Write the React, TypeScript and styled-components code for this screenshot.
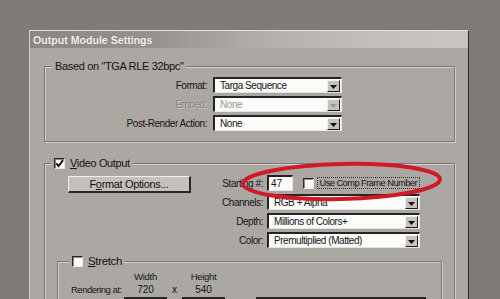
import React from "react";
import styled, { createGlobalStyle } from "styled-components";

const dialogBg = "#aba7a3";
const darkLine = "#7b7774";
const lightLine = "#d3cfcb";

const GlobalStyle = createGlobalStyle`
  html, body {
    margin: 0;
    padding: 0;
    background: #7f7b78;
  }
  body {
    width: 500px;
    height: 299px;
    overflow: hidden;
    font-family: "Liberation Sans", Arial, sans-serif;
    color: #151515;
  }
`;

export default function App() {
  return (
    <>
      <GlobalStyle />
      <Page>
        <Dialog>
          <TitleBar>Output Module Settings</TitleBar>
          <Body>
            <Group>
              <Legend $ml={7}>Based on "TGA RLE 32bpc"</Legend>
              <FormatGrid>
                <Label>Format:</Label>
                <Select value="Targa Sequence" />
                <Label $disabled>Embed:</Label>
                <Select value="None" disabled />
                <Label>Post-Render Action:</Label>
                <Select value="None" />
              </FormatGrid>
            </Group>

            <Group $mt={21}>
              <Legend $ml={6}>
                <CheckBox checked />
                <span>
                  <u>V</u>ideo Output
                </span>
              </Legend>
              <VideoGrid>
                <PushButton>
                  F<u>o</u>rmat Options...
                </PushButton>
                <VLabel>Starting #:</VLabel>
                <InlineRow>
                  <TextBox>47</TextBox>
                  <CheckBox $ml={10} />
                  <FocusLabel>Use Comp Frame Number</FocusLabel>
                </InlineRow>
                <VLabel>Channels:</VLabel>
                <Select value="RGB + Alpha" />
                <VLabel>Depth:</VLabel>
                <Select value="Millions of Colors+" />
                <VLabel>Color:</VLabel>
                <Select value="Premultiplied (Matted)" />
              </VideoGrid>

              <Group $mt={13} $mx={12}>
                <Legend $ml={11} $size={11.5}>
                  <CheckBox />
                  <span>
                    <u>S</u>tretch
                  </span>
                </Legend>
                <StretchGrid>
                  <span />
                  <ColHead>Width</ColHead>
                  <span />
                  <ColHead>Height</ColHead>
                  <span />
                  <SmallLabel>Rendering at:</SmallLabel>
                  <Num>720</Num>
                  <Num>x</Num>
                  <Num>540</Num>
                  <span />
                  <span />
                  <NumBox />
                  <span />
                  <NumBox />
                  <NumBox $ml={31} />
                </StretchGrid>
              </Group>
            </Group>
          </Body>
        </Dialog>

        <Annotation width="500" height="299" viewBox="0 0 500 299">
          <ellipse
            cx="341.5"
            cy="181.5"
            rx="98.5"
            ry="17.5"
            transform="rotate(-1.3 341.5 181.5)"
            fill="none"
            stroke="#cf1b26"
            strokeWidth="4"
          />
        </Annotation>
      </Page>
    </>
  );
}

function Select({ value, disabled }: { value: string; disabled?: boolean }) {
  return (
    <SelectBox $disabled={disabled}>
      <span>{value}</span>
      <ArrowButton>
        <svg width="7" height="4" viewBox="0 0 7 4">
          <path d="M0 0 H7 L3.5 4 Z" fill={disabled ? "#9a9794" : "#111"} />
        </svg>
      </ArrowButton>
    </SelectBox>
  );
}

function CheckBox({ checked, $ml }: { checked?: boolean; $ml?: number }) {
  return (
    <Box $ml={$ml}>
      {checked && (
        <svg width="9" height="9" viewBox="0 0 9 9">
          <path
            d="M1.2 4.4 L3.6 7 L8 1.2"
            fill="none"
            stroke="#111"
            strokeWidth="2"
          />
        </svg>
      )}
    </Box>
  );
}

const Page = styled.div`
  position: relative;
  box-sizing: border-box;
  height: 299px;
  padding: 30px 0 0 29px;
  overflow: hidden;
`;

const Dialog = styled.div`
  box-sizing: border-box;
  width: 440px;
  height: 290px;
  background: ${dialogBg};
  border-top: 1px solid #e4e0dc;
  border-left: 1px solid #d2cec9;
  border-right: 1px solid #2b2927;
`;

const TitleBar = styled.div`
  height: 17px;
  display: flex;
  align-items: center;
  padding-left: 3px;
  background: linear-gradient(
    90deg,
    #8b8783 0%,
    #95918d 28%,
    #b4b0ac 55%,
    #c3bfbb 80%,
    #c9c5c1 100%
  );
  color: #f3efeb;
  font-size: 10.6px;
  font-weight: bold;
  text-shadow: 0 0 1px rgba(60, 56, 52, 0.35);
`;

const Body = styled.div`
  padding: 18px 13px 0 14px;
`;

const Group = styled.div<{ $mt?: number; $mx?: number }>`
  border: 1px solid ${darkLine};
  box-shadow: inset 1px 1px 0 ${lightLine}, 1px 1px 0 ${lightLine};
  margin: ${(p) => p.$mt ?? 0}px ${(p) => p.$mx ?? 0}px 0;
`;

const Legend = styled.div<{ $ml: number; $size?: number }>`
  display: flex;
  align-items: center;
  gap: 5px;
  width: fit-content;
  height: 12px;
  margin: -7px 0 0 ${(p) => p.$ml}px;
  padding: 0 3px;
  background: ${dialogBg};
  font-size: ${(p) => p.$size ?? 11}px;
  letter-spacing: -0.35px;
  white-space: nowrap;
`;

const FormatGrid = styled.div`
  display: grid;
  grid-template-columns: 162px 129px;
  grid-auto-rows: 16px;
  column-gap: 6px;
  row-gap: 3px;
  margin-top: 5px;
  padding-bottom: 10px;
`;

const Label = styled.div<{ $disabled?: boolean }>`
  display: flex;
  align-items: center;
  justify-content: flex-end;
  font-size: 10px;
  letter-spacing: -0.45px;
  white-space: nowrap;
  color: ${(p) => (p.$disabled ? "#8b8885" : "#151515")};
  text-shadow: ${(p) => (p.$disabled ? "1px 1px 0 #c9c5c1" : "none")};
`;

const VideoGrid = styled.div`
  display: grid;
  grid-template-columns: 123px 68px 153px;
  grid-auto-rows: 16px;
  column-gap: 4px;
  row-gap: 3px;
  margin-top: 6px;
  padding-left: 23px;
`;

const VLabel = styled(Label)`
  grid-column: 2;
`;

const SelectBox = styled.div<{ $disabled?: boolean }>`
  box-sizing: border-box;
  display: flex;
  align-items: center;
  height: 16px;
  padding-left: 5px;
  background: #fbfbfa;
  border-top: 2px solid #262422;
  border-left: 2px solid #262422;
  border-bottom: 1px solid #e6e3e0;
  border-right: 1px solid #e6e3e0;
  font-size: 10px;
  letter-spacing: -0.45px;
  white-space: nowrap;
  color: ${(p) => (p.$disabled ? "#9c9996" : "#151515")};

  span {
    flex: 1;
    overflow: hidden;
  }
`;

const ArrowButton = styled.div`
  box-sizing: border-box;
  display: flex;
  align-items: center;
  justify-content: center;
  width: 13px;
  height: 12px;
  margin-right: 1px;
  background: #c6c2be;
  border-top: 1px solid #f2f0ee;
  border-left: 1px solid #f2f0ee;
  border-bottom: 1px solid #1e1c1b;
  border-right: 1px solid #1e1c1b;
  padding-top: 2px;
`;

const PushButton = styled.div`
  box-sizing: border-box;
  display: flex;
  align-items: center;
  justify-content: center;
  height: 17px;
  margin-top: 1px;
  background: #c4c0bc;
  border-top: 1px solid #f0eeec;
  border-left: 1px solid #f0eeec;
  border-bottom: 2px solid #2a2826;
  border-right: 2px solid #2a2826;
  font-size: 11px;
  letter-spacing: -0.35px;
  white-space: nowrap;
`;

const InlineRow = styled.div`
  display: flex;
  align-items: center;
`;

const TextBox = styled.div`
  box-sizing: border-box;
  width: 31px;
  height: 16px;
  display: flex;
  align-items: center;
  padding-left: 2px;
  background: #fbfbfa;
  border-top: 2px solid #262422;
  border-left: 2px solid #262422;
  border-bottom: 1px solid #e6e3e0;
  border-right: 1px solid #e6e3e0;
  font-size: 10px;
`;

const Box = styled.div<{ $ml?: number }>`
  box-sizing: border-box;
  flex: none;
  width: 11px;
  height: 11px;
  margin-left: ${(p) => p.$ml ?? 0}px;
  display: flex;
  align-items: center;
  justify-content: center;
  background: #fbfbfa;
  border-top: 1px solid #2a2826;
  border-left: 1px solid #2a2826;
  border-bottom: 1px solid #e6e3e0;
  border-right: 1px solid #e6e3e0;
  box-shadow: inset 1px 1px 0 #8c8885;
`;

const FocusLabel = styled.div`
  box-sizing: border-box;
  margin-left: 3px;
  height: 12px;
  padding: 0 2px;
  display: flex;
  align-items: center;
  border: 1px dotted #333;
  font-size: 9.3px;
  letter-spacing: -0.55px;
  white-space: nowrap;
`;

const StretchGrid = styled.div`
  display: grid;
  grid-template-columns: 53px 43px 15px 43px 201px;
  grid-template-rows: 12px 12px 16px;
  row-gap: 1px;
  margin-top: 3px;
  padding-left: 13px;
`;

const ColHead = styled.div`
  display: flex;
  align-items: center;
  justify-content: center;
  font-size: 9.5px;
  letter-spacing: -0.3px;
`;

const SmallLabel = styled.div`
  display: flex;
  align-items: center;
  font-size: 9.5px;
  letter-spacing: -0.5px;
  white-space: nowrap;
`;

const Num = styled.div`
  display: flex;
  align-items: center;
  justify-content: center;
  font-size: 10px;
`;

const NumBox = styled.div<{ $ml?: number }>`
  box-sizing: border-box;
  height: 16px;
  margin: 1px 0 0 ${(p) => p.$ml ?? 0}px;
  background: #fbfbfa;
  border-top: 2px solid #262422;
  border-left: 2px solid #262422;
`;

const Annotation = styled.svg`
  position: absolute;
  left: 0;
  top: 0;
  pointer-events: none;
`;
